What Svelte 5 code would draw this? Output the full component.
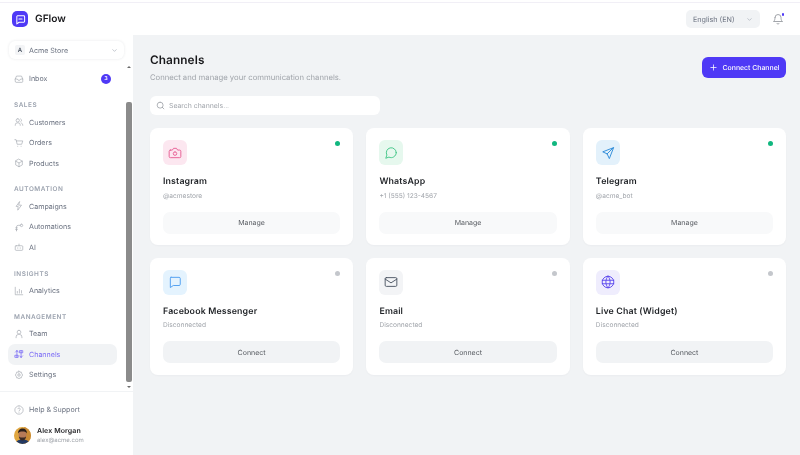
<script>
  const groups = [
    { items: [{ name: 'Inbox', icon: 'inbox', badge: 3 }] },
    { label: 'Sales', items: [{ name: 'Customers', icon: 'users' }, { name: 'Orders', icon: 'cart' }, { name: 'Products', icon: 'box' }] },
    { label: 'Automation', items: [{ name: 'Campaigns', icon: 'zap' }, { name: 'Automations', icon: 'flow' }, { name: 'AI', icon: 'bot' }] },
    { label: 'Insights', items: [{ name: 'Analytics', icon: 'chart' }] },
    { label: 'Management', items: [{ name: 'Team', icon: 'team' }, { name: 'Channels', icon: 'channels', active: true }, { name: 'Settings', icon: 'gear' }] }
  ];

  const channels = [
    { name: 'Instagram', sub: '@acmestore', on: true, icon: 'camera', tint: 'pink' },
    { name: 'WhatsApp', sub: '+1 (555) 123-4567', on: true, icon: 'bubble', tint: 'green' },
    { name: 'Telegram', sub: '@acme_bot', on: true, icon: 'send', tint: 'blue' },
    { name: 'Facebook Messenger', sub: 'Disconnected', on: false, icon: 'square', tint: 'sky' },
    { name: 'Email', sub: 'Disconnected', on: false, icon: 'mail', tint: 'grey' },
    { name: 'Live Chat (Widget)', sub: 'Disconnected', on: false, icon: 'globe', tint: 'violet' }
  ];

  const paths = {
    inbox: 'M3 12l3-7h12l3 7v6a2 2 0 0 1-2 2H5a2 2 0 0 1-2-2zM3 12h5l2 3h4l2-3h5',
    users: 'M3 20v-1a5 5 0 0 1 5-5h2a5 5 0 0 1 5 5v1M9 4a4 4 0 1 1 0 8 4 4 0 0 1 0-8M16 4.5a4 4 0 0 1 0 7M18 14.5a5 5 0 0 1 3 4.5v1',
    cart: 'M2 4h3l2.5 11h11L21 7H6M9 20h.01M17 20h.01',
    box: 'M12 3l8 4.5v9L12 21l-8-4.5v-9zM4 7.500l8 4.500 8-4.500M12 12v9',
    zap: 'M13 2L5 13h5l-1 9 9-12h-6z',
    flow: 'M6 21v-9a4 4 0 0 1 4-4h5M6 21h.01M4 14h4M4 18h4M18 5a3 3 0 1 1 0 6 3 3 0 0 1 0-6',
    bot: 'M5 9h14a2 2 0 0 1 2 2v7a2 2 0 0 1-2 2H5a2 2 0 0 1-2-2v-7a2 2 0 0 1 2-2zM12 9V5M9 14v1M15 14v1',
    chart: 'M3 3v18h18M8 17v-4M13 17V8M18 17v-6',
    team: 'M5 21v-2a6 6 0 0 1 6-6h2a6 6 0 0 1 6 6v2M12 3a4.500 4.500 0 1 1 0 9 4.500 4.500 0 0 1 0-9',
    channels: 'M7 4v16M7 4L3.500 7.500M7 4l3.500 3.500M17 20V4M17 20l-3.500-3.500M17 20l3.500-3.500M3 15h7v5H3zM14 4h7v5h-7z',
    gear: 'M12 2.500l2 2.700 3.300-.5.500 3.300 2.700 2-1.500 2 1.500 2-2.700 2-.5 3.300-3.300-.5-2 2.700-2-2.700-3.300.5-.5-3.300-2.700-2 1.500-2-1.500-2 2.700-2 .5-3.300 3.300.5zM12 9a3 3 0 1 1 0 6 3 3 0 0 1 0-6',
    help: 'M12 2a10 10 0 1 1 0 20 10 10 0 0 1 0-20M9.200 9a3 3 0 0 1 5.800 1c0 2-3 2.500-3 4M12 17.500h.01',
    search: 'M11 3a8 8 0 1 1 0 16 8 8 0 0 1 0-16M21 21l-4.300-4.300',
    chev: 'M6 9l6 6 6-6',
    bell: 'M6 9a6 6 0 0 1 12 0c0 7 3 8 3 8H3s3-1 3-8M10 21a2.200 2.200 0 0 0 4 0',
    plus: 'M12 5v14M5 12h14',
    logo: 'M5 4h14a2 2 0 0 1 2 2v10a2 2 0 0 1-2 2H9l-5 3.500V6a2 2 0 0 1 1-2zM8.500 11h7',
    camera: 'M4 7h3.500L9.500 4h5l2 3H20a2 2 0 0 1 2 2v9a2 2 0 0 1-2 2H4a2 2 0 0 1-2-2V9a2 2 0 0 1 2-2zM12 10a3 3 0 1 1 0 6 3 3 0 0 1 0-6',
    bubble: 'M21 11.500a8.500 8.500 0 0 1-12.500 7.500L3 21l2-5.500A8.500 8.500 0 1 1 21 11.500z',
    send: 'M21 3L3 10l7.500 3.500L14 21zM21 3L10.500 13.500',
    square: 'M5 4h14a2 2 0 0 1 2 2v10a2 2 0 0 1-2 2H9l-5 3.500V6a2 2 0 0 1 1-2z',
    mail: 'M4 4.500h16a2 2 0 0 1 2 2v11a2 2 0 0 1-2 2H4a2 2 0 0 1-2-2v-11a2 2 0 0 1 2-2zM2 7l10 6.500L22 7',
    globe: 'M12 2a10 10 0 1 1 0 20 10 10 0 0 1 0-20M2 9h20M2 15h20M12 2c-5 5.500-5 14.500 0 20M12 2c5 5.500 5 14.500 0 20'
  };
</script>

{#snippet icon(name, size, weight = 2)}
  <svg class="ico" width={size} height={size} viewBox="0 0 24 24" fill="none" stroke="currentColor" stroke-width={weight} stroke-linecap="round" stroke-linejoin="round"><path d={paths[name]} /></svg>
{/snippet}

<div class="page">
  <div class="strip"></div>
  <header class="topbar">
    <div class="brand">
      <span class="logo">{@render icon('logo', 11, 2.2)}</span>
      <span class="brand-name">GFlow</span>
    </div>
    <div class="top-right">
      <div class="lang">
        <span>English (EN)</span>
        {@render icon('chev', 7)}
      </div>
      <div class="bell">
        {@render icon('bell', 12, 1.6)}
        <span class="bell-dot"></span>
      </div>
    </div>
  </header>

  <div class="body">
    <aside class="sidebar">
      <div class="store">
        <span class="store-mark">A</span>
        <span class="store-name">Acme Store</span>
        {@render icon('chev', 7)}
      </div>

      <div class="scroll">
        <nav class="nav">
          {#each groups as group}
            <div class="group">
              {#if group.label}<div class="group-label">{group.label}</div>{/if}
              {#each group.items as item}
                <div class="nav-item" class:active={item.active}>
                  {@render icon(item.icon, 10, 1.6)}
                  <span>{item.name}</span>
                  {#if item.badge}<span class="badge">{item.badge}</span>{/if}
                </div>
              {/each}
            </div>
          {/each}
        </nav>
        <div class="scrollbar">
          <span class="arrow up"></span>
          <div class="track"><div class="thumb"></div></div>
          <span class="arrow down"></span>
        </div>
      </div>

      <div class="side-foot">
        <div class="help">
          {@render icon('help', 10, 1.6)}
          <span>Help &amp; Support</span>
        </div>
        <div class="user">
          <svg class="avatar" width="17" height="17" viewBox="0 0 34 34">
            <defs><clipPath id="av"><circle cx="17" cy="17" r="17" /></clipPath></defs>
            <g clip-path="url(#av)">
              <rect width="34" height="34" fill="#e0a63f" />
              <rect x="20" width="14" height="34" fill="#c98a34" />
              <path d="M3 34c1-7 7-9 14-9s13 2 14 9z" fill="#233a63" />
              <ellipse cx="17" cy="16" rx="8" ry="10" fill="#b67a58" />
              <path d="M8 13c0-7 4-10 9-10s9 3 9 10c-2-3-4-4-9-4s-7 1-9 4z" fill="#2a1f1b" />
              <path d="M10 19c1 7 4 8 7 8s6-1 7-8c-2 2-4 2-7 2s-5 0-7-2z" fill="#3a2a24" />
            </g>
          </svg>
          <div class="user-text">
            <div class="user-name">Alex Morgan</div>
            <div class="user-mail">alex@acme.com</div>
          </div>
        </div>
      </div>
    </aside>

    <main class="main">
      <div class="head">
        <div>
          <h1>Channels</h1>
          <p>Connect and manage your communication channels.</p>
        </div>
        <button class="primary">{@render icon('plus', 9, 2)}<span>Connect Channel</span></button>
      </div>

      <div class="search">
        {@render icon('search', 9, 1.8)}
        <span>Search channels...</span>
      </div>

      <div class="grid">
        {#each channels as ch}
          <section class="card">
            <div class="card-top">
              <span class="tile {ch.tint}">{@render icon(ch.icon, 14, 1.6)}</span>
              <span class="dot" class:on={ch.on}></span>
            </div>
            <h2>{ch.name}</h2>
            <div class="sub">{ch.sub}</div>
            <button class="action" class:off={!ch.on}>{ch.on ? 'Manage' : 'Connect'}</button>
          </section>
        {/each}
      </div>
    </main>
  </div>
</div>

<style>
  :global(body) {
    margin: 0;
    font-family: Inter, "Liberation Sans", sans-serif;
    text-rendering: geometricPrecision;
    background: #f1f3f5;
  }

  .page { width: 800px; height: 455px; display: flex; flex-direction: column; overflow: hidden; will-change: transform; }

  .strip { height: 2px; flex: none; background: #fff; border-bottom: 1px solid #f1eff6; }
  .topbar {
    height: 32px;
    flex: none;
    background: #fff;
    display: flex;
    align-items: center;
    justify-content: space-between;
    padding: 0 16px 0 12px;
  }
  .brand { display: flex; align-items: center; gap: 7px; }
  .logo { width: 16px; height: 16px; border-radius: 5px; background: #4f39f6; color: #fff; display: flex; align-items: center; justify-content: center; }
  .brand-name { font-size: 10.200px; font-weight: 600; color: #18181b; }
  .top-right { display: flex; align-items: center; gap: 12px; }
  .lang { width: 74px; height: 18px; box-sizing: border-box; padding: 0 7px; border-radius: 5px; background: #f1f3f5; display: flex; align-items: center; justify-content: space-between; font-size: 7.200px; color: #6b7280; }
  .lang .ico { color: #9ca3af; }
  .bell { position: relative; width: 12px; height: 12px; color: #8b8f96; }
  .bell-dot { position: absolute; top: 0; right: 0; width: 2.500px; height: 2.500px; border-radius: 50%; background: #4f39f6; }
  .ico { display: block; flex: none; }

  .body { flex: 1; display: flex; min-height: 0; }

  .sidebar { width: 133px; flex: none; background: #fff; display: flex; flex-direction: column; }
  .store {
    margin: 6px 9px 0;
    height: 18px;
    padding: 0 6px;
    border-radius: 6px;
    background: #fff;
    box-shadow: 0 0 3px rgba(30, 40, 60, 0.1);
    display: flex;
    align-items: center;
    gap: 4px;
    font-size: 7.100px;
    color: #6b7280;
    flex: none;
  }
  .store-mark { width: 10px; height: 10px; border-radius: 2px; background: #f3f4f6; color: #4b5563; font-size: 6px; font-weight: 600; display: flex; align-items: center; justify-content: center; }
  .store-name { flex: 1; }
  .store .ico { color: #9ca3af; }

  .scroll { flex: 1; min-height: 0; display: flex; margin-top: 5px; }
  .nav { flex: 1; min-width: 0; padding: 4.500px 0 0 8px; display: flex; flex-direction: column; gap: 11px; }
  .group-label { font-size: 6.400px; font-weight: 600; letter-spacing: 0.55px; text-transform: uppercase; color: #9ca3af; padding: 0 0 0 6px; height: 11px; line-height: 11px; margin-bottom: 0.800px; }
  .nav-item { width: 109px; height: 20.500px; box-sizing: border-box; padding: 0 6px; border-radius: 7px; display: flex; align-items: center; gap: 5px; font-size: 7.100px; color: #6b7280; }
  .nav-item .ico { color: #a4a9b1; }
  .nav-item.active { background: #f1f3f5; color: #7c6cf6; }
  .nav-item.active .ico { color: #6d5cf6; }
  .badge { margin-left: auto; width: 10px; height: 10px; border-radius: 50%; background: #4f39f6; color: #fff; font-size: 5.500px; font-weight: 600; display: flex; align-items: center; justify-content: center; }

  .scrollbar { width: 6px; margin-right: 1px; display: flex; flex-direction: column; align-items: center; flex: none; }
  .arrow { flex: none; width: 0; height: 0; border-left: 2px solid transparent; border-right: 2px solid transparent; }
  .arrow.up { border-bottom: 2.500px solid #6b6b6b; margin-top: 2px; }
  .arrow.down { border-top: 2.500px solid #6b6b6b; margin-bottom: 3px; }
  .track { flex: 1; width: 100%; padding-top: 33.500px; padding-bottom: 4px; box-sizing: border-box; display: flex; }
  .thumb { flex: 1; width: 4px; margin: 0 auto; border-radius: 2px; background: #8b8b8b; }

  .side-foot { flex: none; height: 64px; box-sizing: border-box; border-top: 1px solid #f1f3f5; padding: 7px 8px 0 14px; }
  .help { display: flex; align-items: center; gap: 5px; height: 21px; font-size: 7.100px; color: #6b7280; }
  .help .ico { color: #a4a9b1; }
  .user { display: flex; align-items: center; gap: 6px; margin-top: 4px; }
  .avatar { display: block; flex: none; }
  .user-text { padding-top: 2px; }
  .user-name { font-size: 7px; font-weight: 600; color: #27272a; line-height: 10px; letter-spacing: 0.1px; }
  .user-mail { font-size: 6px; color: #a1a5ab; line-height: 10px; }

  .main { flex: 1; min-width: 0; padding: 18px 14px 0 17px; }
  .head { display: flex; justify-content: space-between; align-items: flex-start; }
  h1 { margin: 0; font-size: 11.800px; line-height: 15px; font-weight: 600; color: #18181b; letter-spacing: 0.1px; }
  .head p { margin: 4px 0 0; font-size: 7.700px; line-height: 11px; color: #a1a5ab; }
  .primary { margin-top: 4px; width: 84px; height: 21px; border: 0; border-radius: 6px; padding: 0; background: #4f39f6; color: #fff; font: 500 6.900px Inter, sans-serif; text-rendering: geometricPrecision; display: flex; align-items: center; justify-content: center; gap: 5px; }

  .search { width: 230px; height: 19px; margin-top: 13px; box-sizing: border-box; padding: 0 6px; border-radius: 6px; background: #fff; display: flex; align-items: center; gap: 4px; font-size: 6.900px; color: #a1a5ab; }
  .search .ico { color: #8b8f96; }

  .grid { display: grid; grid-template-columns: repeat(3, 1fr); gap: 13.300px; margin-top: 13px; }
  .card { height: 116.700px; box-sizing: border-box; padding: 12px 13px 0; border-radius: 8px; background: #fff; box-shadow: 0 1px 2px rgba(30, 40, 60, 0.03); display: flex; flex-direction: column; }
  .card-top { display: flex; justify-content: space-between; align-items: flex-start; }
  .tile { width: 24px; height: 25px; border-radius: 6px; display: flex; align-items: center; justify-content: center; }
  .pink { background: #fce7f0; color: #e65c92; }
  .green { background: #e6f8ee; color: #3fc585; }
  .blue { background: #e3f1fb; color: #2b8ad8; }
  .sky { background: #e4f3fe; color: #4b9cf0; }
  .grey { background: #f3f4f6; color: #4b5563; }
  .violet { background: #efedfd; color: #5b48ee; }
  .dot { width: 5px; height: 5px; border-radius: 50%; background: #c4c7cc; margin: 1px 0 0; }
  .dot.on { background: #10b77f; }
  h2 { margin: 11px 0 0; font-size: 8.800px; line-height: 12px; font-weight: 600; color: #1f2226; letter-spacing: 0.15px; }
  .sub { margin-top: 2.500px; font-size: 6.600px; line-height: 10px; color: #a1a5ab; }
  .action { margin-top: 11px; height: 22px; border: 0; border-radius: 7px; padding: 0; background: #f8f9fa; color: #55595f; font: 400 7px Inter, sans-serif; text-rendering: geometricPrecision; }
  .action.off { background: #f1f3f5; }
</style>
